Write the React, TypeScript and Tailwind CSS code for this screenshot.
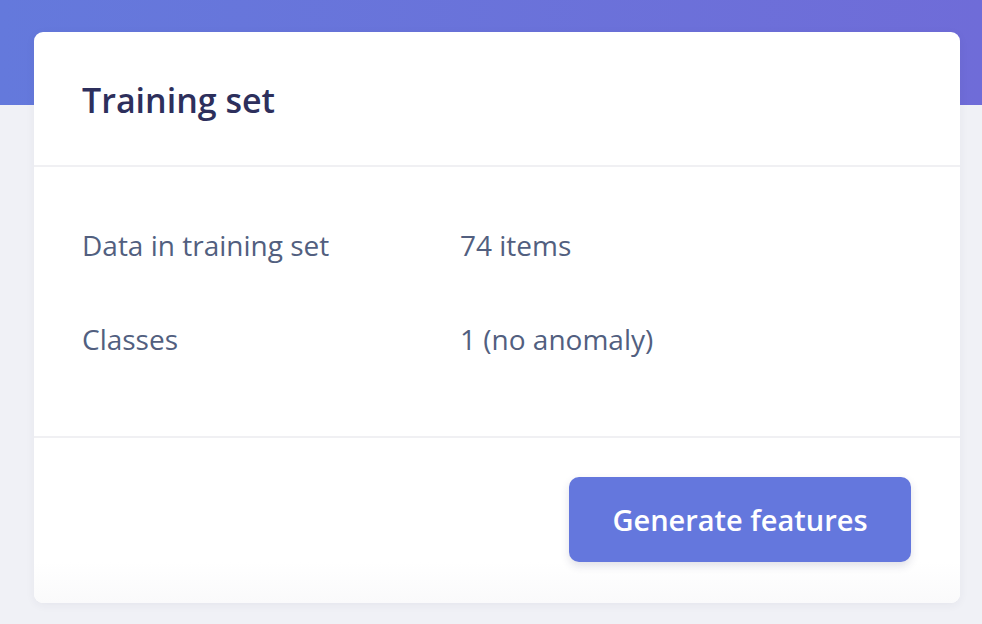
export default function App() {
  return (
    <div className="relative w-[982px] h-[624px] overflow-hidden bg-[#f0f1f6]" style={{ fontFamily: '"Open Sans", "Noto Sans", sans-serif' }}>
      <div className="absolute left-0 top-0 w-full h-[105px] bg-gradient-to-r from-[#6479dc] to-[#6f6cd8]" />
      <div className="relative pt-[32px] pl-[34px] pr-[22px]">
        <div className="w-[926px] h-[571px] bg-white rounded-[9px] shadow-[0_2px_10px_rgba(50,50,93,0.06)] flex flex-col overflow-hidden">
          <div className="h-[135px] shrink-0 border-b-2 border-[#f0f0f3] flex items-center px-[48px] pt-[3px]">
            <h1 className="text-[34px] font-semibold text-[#2d2f5c]">Training set</h1>
          </div>
          <div className="h-[271px] shrink-0 border-b-2 border-[#f0f0f3] px-[48px] pt-[61px] flex flex-col gap-[60px]">
            <div className="flex text-[28px] text-[#525f7f] leading-[34px]">
              <div className="w-[378px]">Data in training set</div>
              <div>74 items</div>
            </div>
            <div className="flex text-[28px] text-[#525f7f] leading-[34px]">
              <div className="w-[378px]">Classes</div>
              <div>1 (no anomaly)</div>
            </div>
          </div>
          <div className="flex-1 flex justify-end items-start pt-[39px] pr-[49px] bg-gradient-to-b from-white from-[75%] to-[#fafafb]">
            <button className="w-[342px] h-[85px] rounded-[10px] bg-[#6477dd] text-white text-[29px] font-semibold shadow-[0_4px_8px_rgba(50,50,93,0.15)]">
              Generate features
            </button>
          </div>
        </div>
      </div>
    </div>
  );
}
